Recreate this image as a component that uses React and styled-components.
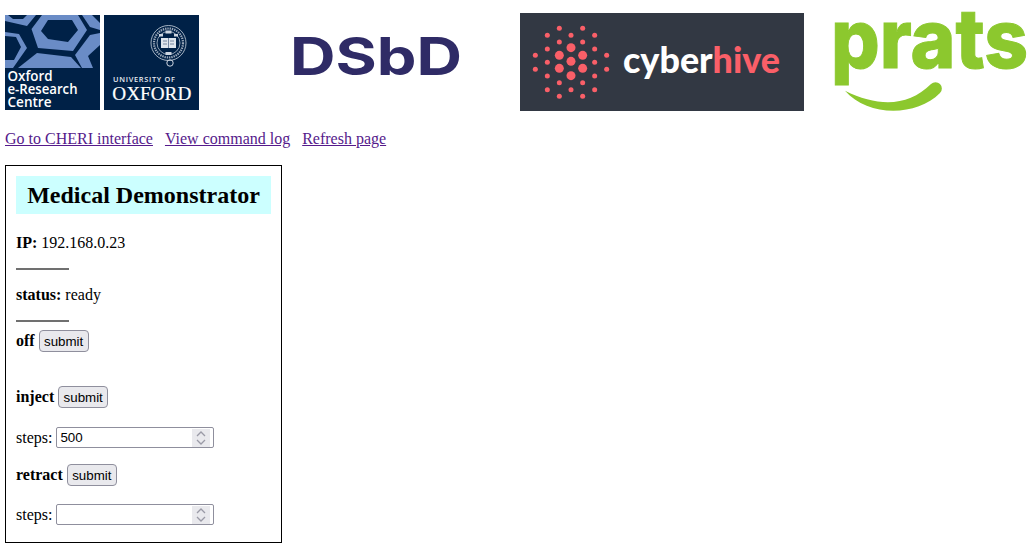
import styled, { createGlobalStyle } from "styled-components";

const GlobalStyle = createGlobalStyle`
  body {
    margin: 5px;
    background: #fff;
    color: #000;
    font-family: "Liberation Serif", "Times New Roman", serif;
    font-size: 16px;
  }
`;

const LogoRow = styled.header`
  display: flex;
  align-items: flex-end;
  gap: 4px;
  height: 107px;
`;
const Logo = styled.svg`
  display: block;
  flex: none;
  overflow: visible;
  margin-bottom: ${(props) => props.$lift || 0}px;
`;
const LinkRow = styled.nav`
  display: flex;
  gap: 12px;
  margin-top: 18px;
`;
const NavLink = styled.a`
  color: #551a8b;
  text-decoration: underline;
`;
const Card = styled.section`
  box-sizing: border-box;
  width: 277px;
  height: 378px;
  margin-top: 17px;
  padding: 10px;
  border: 1px solid #000;
`;
const Title = styled.h1`
  margin: 0;
  padding: 5px 0;
  background: #ccffff;
  font-size: 24px;
  line-height: 28px;
  text-align: center;
`;
const Line = styled.p`
  margin: ${(props) => props.$top}px 0 0;
  line-height: 18px;
`;
const Divider = styled.hr`
  width: 53px;
  height: 2px;
  margin: 16px 0 0;
  border: 0;
  background: #707070;
`;
const Row = styled.div`
  display: flex;
  align-items: center;
  gap: 4px;
  margin-top: ${(props) => props.$top}px;
`;
const SubmitButton = styled.button`
  box-sizing: border-box;
  height: 22px;
  width: 50px;
  padding: 0;
  background: #e9e9ed;
  border: 1px solid #8f8f9d;
  border-radius: 4px;
  color: #000;
  font-family: "Liberation Sans", Arial, sans-serif;
  font-size: 13.33px;
`;
const NumberBox = styled.div`
  box-sizing: border-box;
  display: flex;
  align-items: center;
  width: 158px;
  height: 21px;
  padding: 0 3px;
  background: #fff;
  border: 1px solid #8f8f9d;
  border-radius: 2px;
`;
const NumberInput = styled.input`
  flex: 1;
  min-width: 0;
  padding: 0;
  border: 0;
  outline: 0;
  background: none;
  color: #000;
  font-family: "Liberation Sans", Arial, sans-serif;
  font-size: 13.33px;
  appearance: textfield;
  &::-webkit-inner-spin-button,
  &::-webkit-outer-spin-button {
    appearance: none;
    margin: 0;
  }
`;
const Spinner = styled.svg`
  display: block;
  flex: none;
  background: #e9e9ed;
`;

const Stepper = ({ value }) => (
  <NumberBox>
    <NumberInput type="number" defaultValue={value} />
    <Spinner width="18" height="18" viewBox="0 0 18 18">
      <path d="M5 7l4-4 4 4M5 11l4 4 4-4" fill="none" stroke="#9a9aa6" strokeWidth="1.3" />
    </Spinner>
  </NumberBox>
);

const bigDots = [
  [123, 83], [88, 106], [158, 106], [123, 124], [88, 145], [158, 145], [123, 167],
];
const smallDots = [
  [88, 25], [158, 25], [52, 46], [123, 46], [194, 46], [88, 66], [158, 66], [52, 87],
  [194, 87], [16, 106], [230, 106], [52, 127], [194, 127], [16, 148], [230, 148], [52, 168],
  [194, 168], [88, 188], [158, 188], [52, 209], [123, 209], [194, 209], [88, 229], [158, 229],
];

const OercLogo = () => (
  <Logo width="95" height="95" viewBox="0 0 95 95" $lift={2}>
    <rect width="95" height="95" fill="#002147" />
    <g fill="#6a8cc6">
      <path fillRule="evenodd" d="M26.5 14L37 0H73L82 15 68 36 33 33ZM36 16L43 5H67L73 15 63 27 43 24Z" />
      <path d="M0 0H3L8 4H18L22 0H31L22 11 0 6Z" />
      <path fillRule="evenodd" d="M0 17L14 19 22 33 8 53H0ZM0 21V45H9L16 32 11 22Z" />
      <path d="M13 53L32 38 66 42 76 53Z" />
      <path d="M70 40L85 20 95 18V30L83 41 88 53H77Z" />
      <path d="M77 0H87L95 8V15L85 12Z" />
    </g>
    <g fill="#fff" fontFamily="'Open Sans', sans-serif" fontWeight="600" fontSize="14">
      <text x="2.5" y="66" textLength="45" lengthAdjust="spacingAndGlyphs">Oxford</text>
      <text x="2.5" y="79" textLength="70" lengthAdjust="spacingAndGlyphs">e-Research</text>
      <text x="2.5" y="92" textLength="44" lengthAdjust="spacingAndGlyphs">Centre</text>
    </g>
  </Logo>
);

const OxfordLogo = () => (
  <Logo width="95" height="95" viewBox="0 0 95 95" $lift={2}>
    <rect width="95" height="95" fill="#002147" />
    <g fill="none" stroke="#cdd5e0">
      <circle cx="64.5" cy="28" r="17.5" strokeWidth="0.8" />
      <circle cx="64.5" cy="28" r="14.5" strokeWidth="2.2" strokeDasharray="1.4 0.9" opacity="0.75" />
      <circle cx="64.5" cy="28" r="11.5" strokeWidth="0.7" />
      <circle cx="66" cy="48" r="3.2" strokeWidth="1" />
    </g>
    <rect x="57" y="23" width="15" height="10" fill="#dfe5ec" />
    <path d="M64.5 23v10M59 26h4M59 29h4M66 26h4M66 29h4" stroke="#5b6f8e" strokeWidth="0.8" />
    <g fill="#cdd5e0">
      <rect x="61.5" y="15.5" width="6" height="3" />
      <rect x="55" y="19" width="4" height="2.5" />
      <rect x="70" y="19" width="4" height="2.5" />
      <rect x="61.5" y="37" width="6" height="3" />
    </g>
    <text x="9" y="67" textLength="62" fill="#e8ecf2" fontFamily="'Open Sans', sans-serif" fontWeight="600" fontSize="7.4">UNIVERSITY OF</text>
    <text x="8.3" y="85" textLength="79" lengthAdjust="spacingAndGlyphs" fill="#fff" stroke="#fff" strokeWidth="0.2" fontFamily="'Liberation Serif', serif" fontSize="18.5">OXFORD</text>
  </Logo>
);

const DsbdLogo = () => (
  <Logo width="313" height="95" viewBox="0 0 313 95" $lift={2}>
    <text x="87" y="60" textLength="172" lengthAdjust="spacingAndGlyphs" fill="#2f2b66" fontFamily="Inter, sans-serif" fontWeight="700" fontSize="52">DSbD</text>
  </Logo>
);

const CyberhiveLogo = () => (
  <Logo width="284" height="98" viewBox="0 0 284 98" $lift={1}>
    <rect width="284" height="98" fill="#323843" />
    <g fill="#fa5f68">
      {bigDots.map(([x, y]) => (
        <circle key={`${x}-${y}`} cx={10 + x / 3} cy={7 + y / 3} r="4.5" />
      ))}
      {smallDots.map(([x, y]) => (
        <circle key={`${x}-${y}`} cx={10 + x / 3} cy={7 + y / 3} r="2.5" />
      ))}
    </g>
    <text x="103" y="60" textLength="157" lengthAdjust="spacingAndGlyphs" fontFamily="Lato, sans-serif" fontWeight="900" fontSize="36" fill="#fff">
      cyber<tspan fill="#fa5f68">hive</tspan>
    </text>
  </Logo>
);

const PratsLogo = () => (
  <Logo width="222" height="107" viewBox="0 0 222 107">
    <text x="23" y="63" textLength="197" lengthAdjust="spacingAndGlyphs" fill="#8cc82e" stroke="#8cc82e" strokeWidth="1" fontFamily="Inter, sans-serif" fontWeight="800" fontSize="82">prats</text>
    <path d="M37 85.7C60 112 108 112 132 88A6 6 0 0 0 123 79C100 102 70 102 37 85.7Z" fill="#8cc82e" />
  </Logo>
);

export default function App() {
  return (
    <>
      <GlobalStyle />
      <LogoRow>
        <OercLogo />
        <OxfordLogo />
        <DsbdLogo />
        <CyberhiveLogo />
        <PratsLogo />
      </LogoRow>
      <LinkRow>
        <NavLink href="#">Go to CHERI interface</NavLink>
        <NavLink href="#">View command log</NavLink>
        <NavLink href="#">Refresh page</NavLink>
      </LinkRow>
      <Card>
        <Title>Medical Demonstrator</Title>
        <Line $top={20}>
          <b>IP:</b> 192.168.0.23
        </Line>
        <Divider />
        <Line $top={16}>
          <b>status:</b> ready
        </Line>
        <Divider />
        <Row $top={8}>
          <b>off</b>
          <SubmitButton>submit</SubmitButton>
        </Row>
        <Row $top={34}>
          <b>inject</b>
          <SubmitButton>submit</SubmitButton>
        </Row>
        <Row $top={19}>
          steps:
          <Stepper value={500} />
        </Row>
        <Row $top={16}>
          <b>retract</b>
          <SubmitButton>submit</SubmitButton>
        </Row>
        <Row $top={18}>
          steps:
          <Stepper />
        </Row>
      </Card>
    </>
  );
}
